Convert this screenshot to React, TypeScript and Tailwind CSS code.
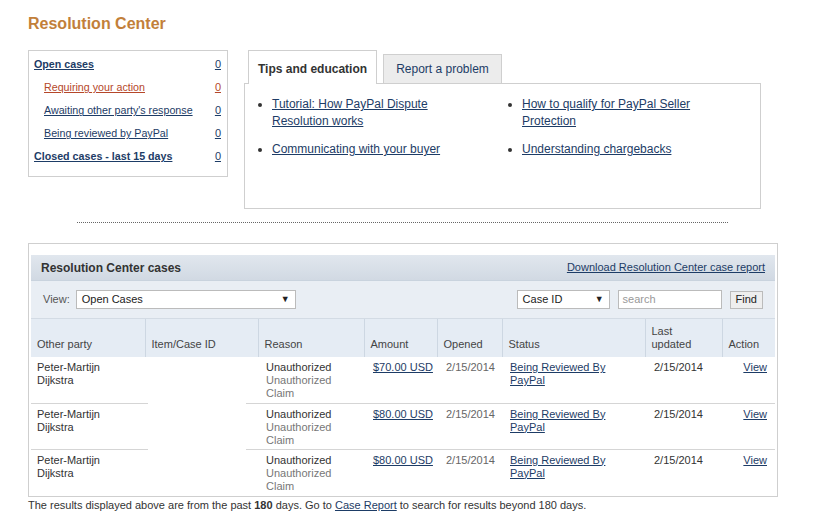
import React from 'react';

// ---- data ----
const SUMMARY = [
  { label: 'Open cases', count: 0, indent: false, strong: true, red: false },
  { label: 'Requiring your action', count: 0, indent: true, strong: false, red: true },
  { label: "Awaiting other party's response", count: 0, indent: true, strong: false, red: false },
  { label: 'Being reviewed by PayPal', count: 0, indent: true, strong: false, red: false },
  { label: 'Closed cases - last 15 days', count: 0, indent: false, strong: true, red: false },
];

const TIPS_LEFT = ['Tutorial: How PayPal Dispute Resolution works', 'Communicating with your buyer'];
const TIPS_RIGHT = ['How to qualify for PayPal Seller Protection', 'Understanding chargebacks'];

const CASES = [
  { party: 'Peter-Martijn Dijkstra', amount: '$70.00 USD', opened: '2/15/2014', updated: '2/15/2014' },
  { party: 'Peter-Martijn Dijkstra', amount: '$80.00 USD', opened: '2/15/2014', updated: '2/15/2014' },
  { party: 'Peter-Martijn Dijkstra', amount: '$80.00 USD', opened: '2/15/2014', updated: '2/15/2014' },
];

const COLS = [
  { label: 'Other party', w: 'w-[114px]' },
  { label: 'Item/Case ID', w: 'w-[113px]' },
  { label: 'Reason', w: 'w-[106px]' },
  { label: 'Amount', w: 'w-[73px]' },
  { label: 'Opened', w: 'w-[65px]' },
  { label: 'Status', w: 'w-[143px]' },
  { label: 'Last updated', w: 'w-[77px]' },
  { label: 'Action', w: 'w-[53px]' },
];

const link = 'text-[#1d3c66] underline';

// ---- sub-components ----
function SummaryBox() {
  return (
    <div className="w-[200px] h-[127px] border border-[#cfcfcf] pt-[2px] pl-[5px] pr-[6px]">
      {SUMMARY.map((row) => (
        <div key={row.label} className="h-[23px] flex items-center justify-between text-[10.7px]">
          <a
            className={`${row.indent ? 'pl-[10px]' : ''} ${row.strong ? 'font-bold' : ''} underline ${
              row.red ? 'text-[#b5472a]' : 'text-[#1d3c66]'
            }`}
          >
            {row.label}
          </a>
          <a className={`underline text-[11px] ${row.red ? 'text-[#b5472a]' : 'text-[#1d3c66]'}`}>{row.count}</a>
        </div>
      ))}
    </div>
  );
}

function TipsPanel() {
  return (
    <div className="w-[517px] flex flex-col">
      <div className="flex items-end pl-[4px] gap-[6px] h-[34px] relative z-10">
        <div className="h-[34px] w-[129px] border border-[#cfcfcf] border-b-0 bg-white flex items-center justify-center text-[12px] font-bold text-[#333] pt-[3px]">
          Tips and education
        </div>
        <div className="h-[29px] w-[119px] border border-[#cfcfcf] border-b-0 bg-[#ececec] flex items-center justify-center text-[12px] text-[#1d3c66] mb-[1px]">
          Report a problem
        </div>
      </div>
      <div className="-mt-[1px] h-[126px] border border-[#cfcfcf] pt-[12px] pl-[14px] flex text-[12px] leading-[17px]">
        {[TIPS_LEFT, TIPS_RIGHT].map((list, i) => (
          <ul key={i} className="w-[250px] list-disc pl-[13px] marker:text-[#333]">
            {list.map((t) => (
              <li key={t} className="mb-[11px] pr-[28px]">
                <a className={link}>{t}</a>
              </li>
            ))}
          </ul>
        ))}
      </div>
    </div>
  );
}

function CasesPanel() {
  return (
    <div className="w-[750px] border border-[#cfcfcf] pt-[11px] px-[2px] pb-[1px]">
      <div className="h-[26px] bg-gradient-to-b from-[#e1e7ee] to-[#d1d9e3] flex items-center justify-between px-[10px] border-b border-[#c9d3de]">
        <span className="text-[12px] font-bold text-[#333]">Resolution Center cases</span>
        <a className={`${link} text-[11px]`}>Download Resolution Center case report</a>
      </div>
      <div className="h-[38px] bg-[#e9eef4] flex items-center px-[12px] text-[11px] text-[#555] border-b border-[#d3dbe4]">
        <span className="mr-[6px]">View:</span>
        <div className="w-[220px] h-[19px] bg-white border border-[#bbb] flex items-center justify-between px-[5px] text-[#222]">
          <span>Open Cases</span>
          <span className="text-[9px]">▼</span>
        </div>
        <div className="flex-1" />
        <div className="w-[93px] h-[19px] bg-white border border-[#bbb] flex items-center justify-between px-[5px] text-[#222]">
          <span>Case ID</span>
          <span className="text-[9px]">▼</span>
        </div>
        <div className="ml-[8px] w-[104px] h-[19px] bg-white border border-[#bbb] flex items-center px-[4px] text-[#999]">
          search
        </div>
        <div className="ml-[8px] h-[18px] px-[5px] bg-[#eeeeee] border border-[#bbb] flex items-center text-[#222]">
          Find
        </div>
      </div>
      <div className="relative">
        <table className="w-full border-collapse table-fixed text-[11px]">
          <thead>
            <tr className="h-[38px] bg-[#e5ecf4]">
              {COLS.map((c, i) => (
                <th
                  key={c.label}
                  className={`${c.w} align-bottom text-left font-normal text-[#444] pb-[6px] pl-[6px] leading-[13px] ${
                    i > 0 ? 'border-l border-[#cdd7e2]' : ''
                  }`}
                >
                  {c.label === 'Last updated' ? (
                    <>
                      Last
                      <br />
                      updated
                    </>
                  ) : (
                    c.label
                  )}
                </th>
              ))}
            </tr>
          </thead>
          <tbody className="leading-[13px] text-[#333]">
            {CASES.map((r, idx) => (
              <tr key={idx} className={`h-[46px] ${idx < CASES.length - 1 ? 'border-b border-[#d5d5d5]' : ''}`}>
                <td className="align-top pt-[4px] pl-[6px] pr-[30px]">{r.party}</td>
                <td />
                <td className="align-top pt-[4px] pl-[8px]">
                  Unauthorized
                  <br />
                  <span className="text-[#777]">
                    Unauthorized
                    <br />
                    Claim
                  </span>
                </td>
                <td className="align-top pt-[4px] pl-[9px]">
                  <a className={link}>{r.amount}</a>
                </td>
                <td className="align-top pt-[4px] pl-[9px] text-[#666]">{r.opened}</td>
                <td className="align-top pt-[4px] pl-[8px] pr-[30px]">
                  <a className={link}>Being Reviewed By PayPal</a>
                </td>
                <td className="align-top pt-[4px] pl-[9px]">{r.updated}</td>
                <td className="align-top pt-[4px] pr-[8px] text-right">
                  <a className={link}>View</a>
                </td>
              </tr>
            ))}
          </tbody>
        </table>
        {/* redacted case ids */}
        <div className="absolute left-[117px] top-[38px] w-[98px] h-[138px] bg-white" />
      </div>
    </div>
  );
}

// ---- main export ----
export default function App() {
  return (
    <div className="w-[819px] h-[527px] bg-white pl-[28px] pt-[12px] font-['Liberation_Sans',Arial,sans-serif] text-[#333] overflow-hidden">
      <h1 className="text-[16px] leading-[24px] font-bold text-[#c27f3a]">Resolution Center</h1>
      <div className="flex gap-[16px] mt-[14px]">
        <SummaryBox />
        <TipsPanel />
      </div>
      <div className="ml-[49px] mt-[13px] w-[651px] border-t border-dotted border-[#666]" />
      <div className="mt-[20px]">
        <CasesPanel />
      </div>
      <p className="text-[11px] leading-[14px] mt-[1px] text-[#333]">
        The results displayed above are from the past <b>180</b> days. Go to{' '}
        <a className={link}>Case Report</a> to search for results beyond 180 days.
      </p>
    </div>
  );
}
